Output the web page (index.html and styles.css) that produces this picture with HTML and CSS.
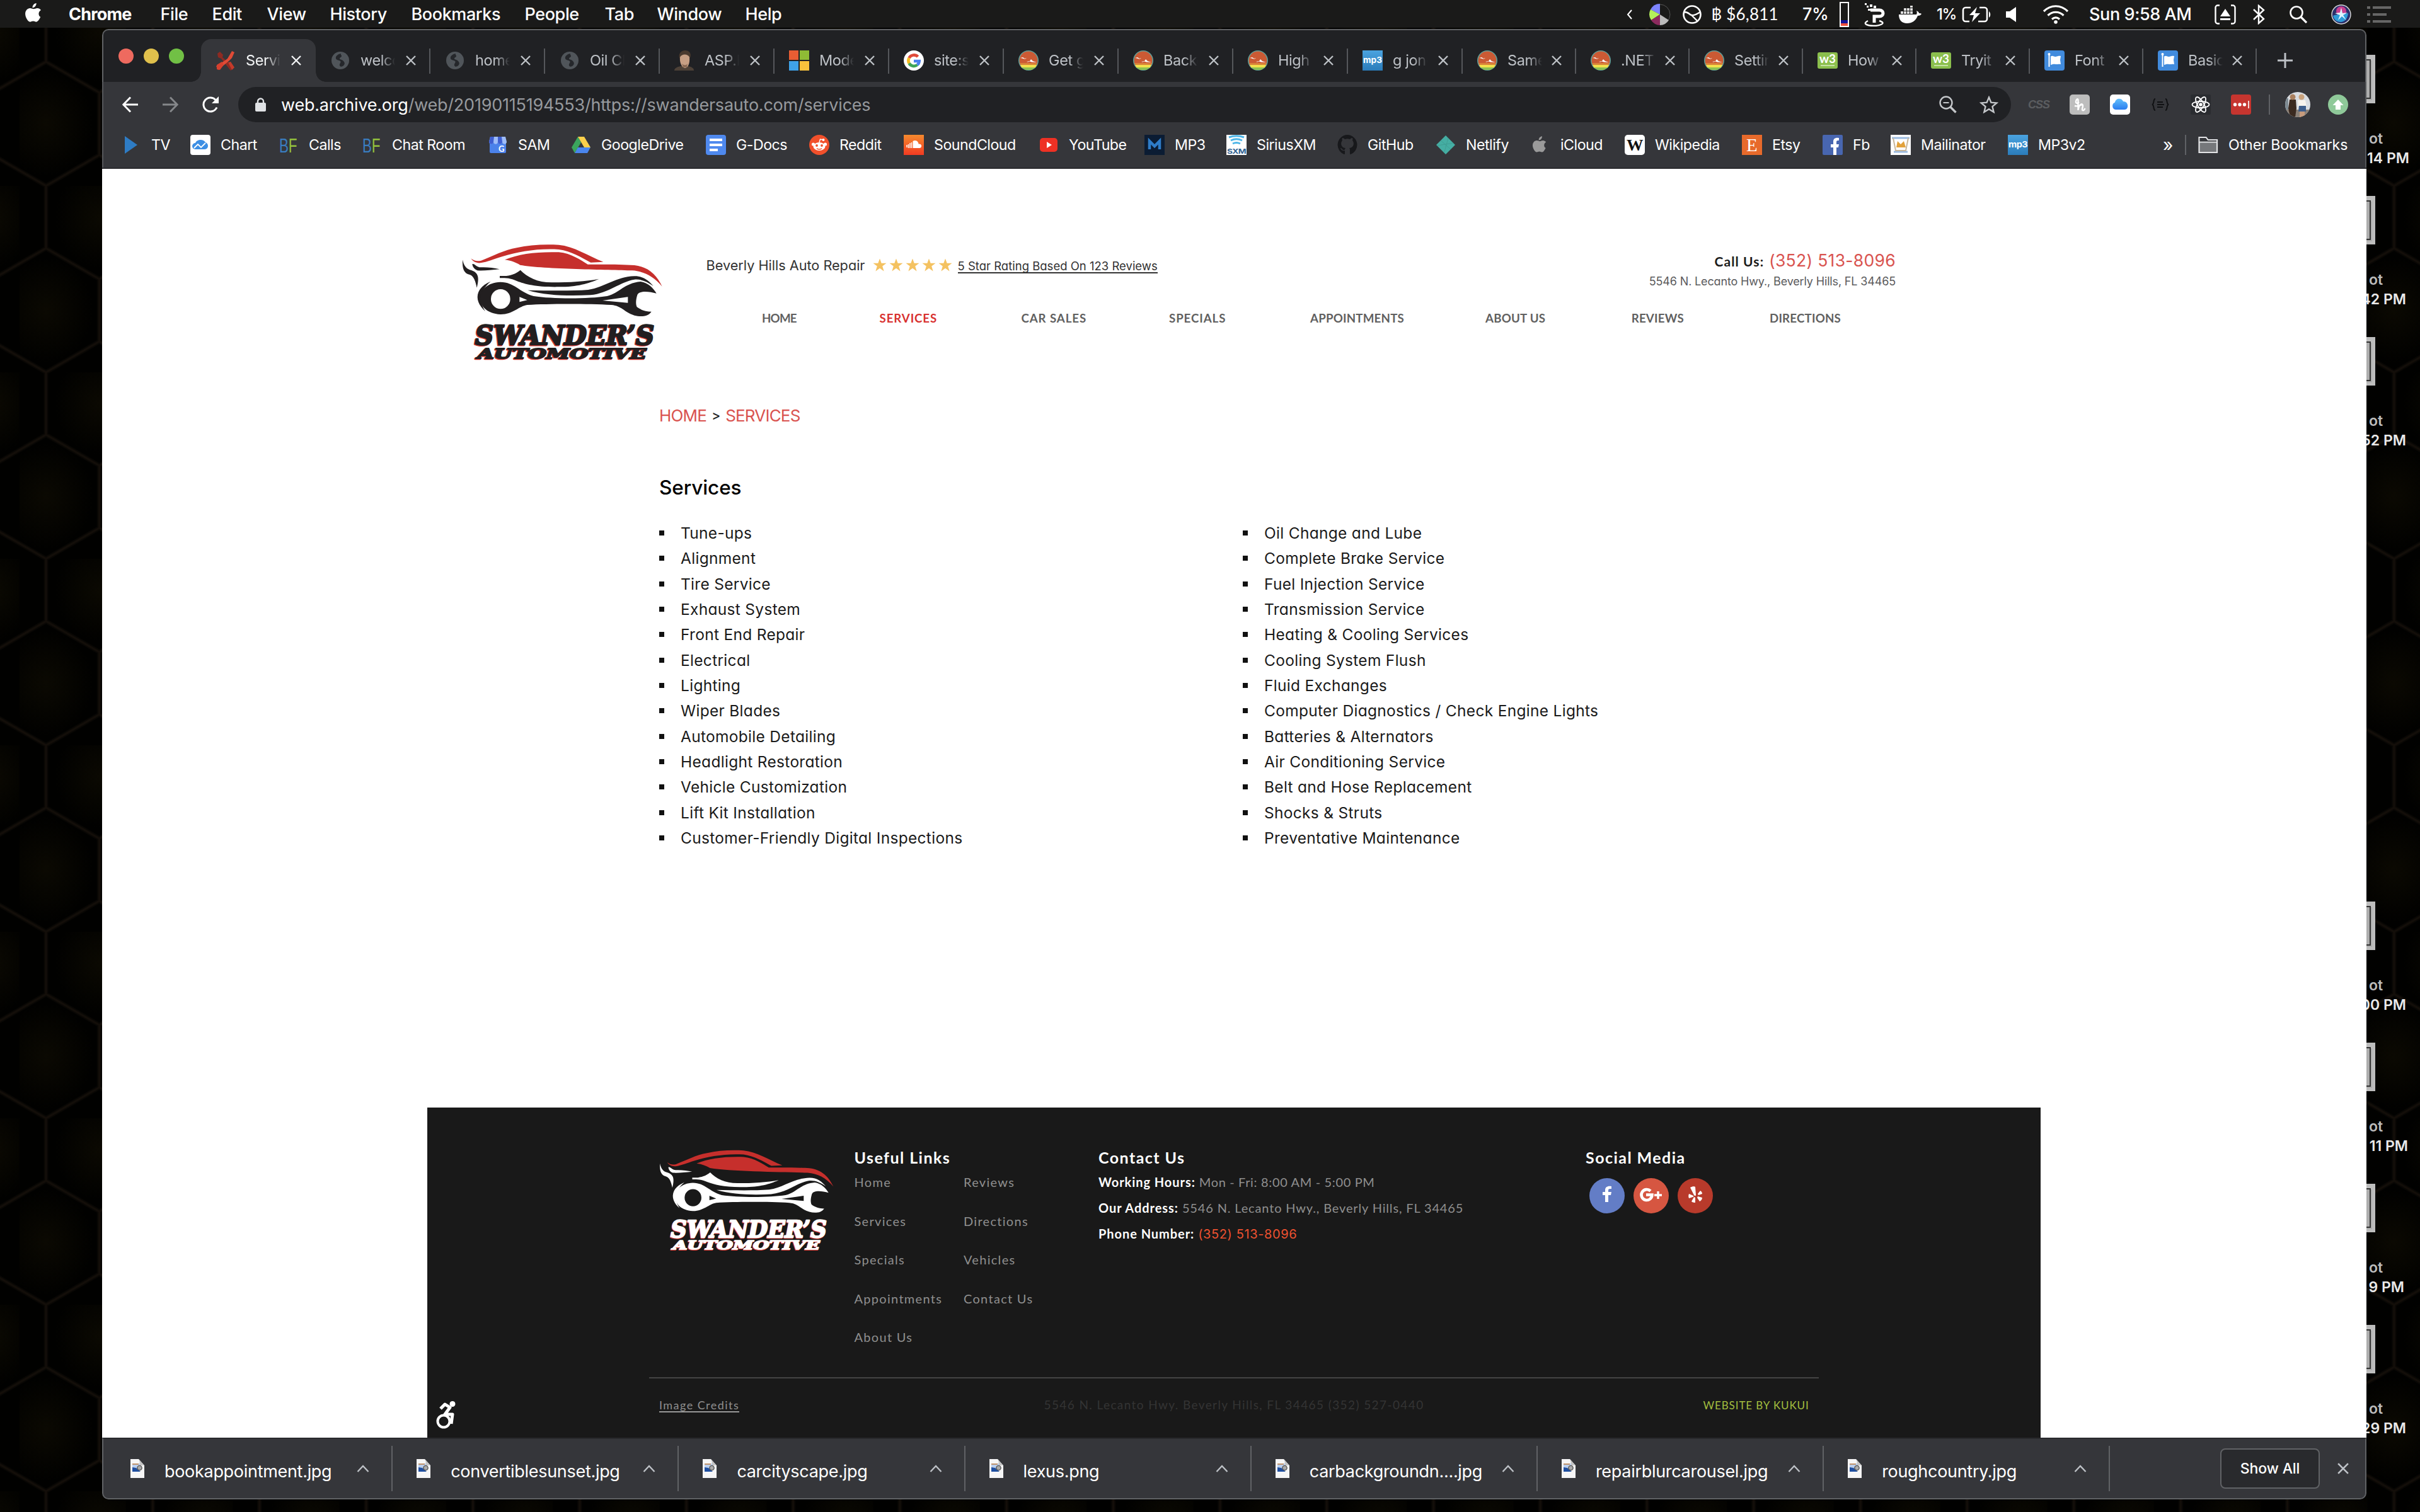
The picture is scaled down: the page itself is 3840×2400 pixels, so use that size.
FILE: index.html
```html
<!DOCTYPE html>
<html lang="en">
<head>
<meta charset="utf-8">
<title>Services</title>
<link rel="stylesheet" href="styles.css">
</head>
<body>
<svg class="defs" width="0" height="0" aria-hidden="true">
  <defs>
    <linearGradient id="g-mp3" x1="0" y1="0" x2="0" y2="1"><stop offset="0" stop-color="#4aa3e0"/><stop offset="1" stop-color="#2b7cba"/></linearGradient>
    <linearGradient id="g-sc" x1="0" y1="0" x2="0" y2="1"><stop offset="0" stop-color="#f58a2e"/><stop offset="1" stop-color="#f23b22"/></linearGradient>
    <linearGradient id="g-cloud" x1="0" y1="0" x2="0" y2="1"><stop offset="0" stop-color="#62c0fb"/><stop offset="1" stop-color="#2a7df0"/></linearGradient>
    <clipPath id="c-round"><circle cx="16" cy="16" r="16"/></clipPath>
  </defs>
  <symbol id="close" viewBox="0 0 16 16"><path d="M1 1L15 15M15 1L1 15" stroke="currentColor" stroke-width="2.4" fill="none"/></symbol>
  <symbol id="globe" viewBox="0 0 32 32"><circle cx="16" cy="16" r="14" fill="#50555a"/><path d="M17 5c-5 1-9 4-8 8 1 3 5 2 7 4s-2 4-1 7 5 2 7-1 0-5-2-7-5-1-5-3 3-2 3-4-2-2-1-4z" fill="#25272b"/></symbol>
  <symbol id="sunset" viewBox="0 0 32 32"><g clip-path="url(#c-round)"><rect width="32" height="32" fill="#5f9d97"/><circle cx="16" cy="16" r="14.4" fill="#cb5a34"/><path d="M2 20h28l-2 4H4z" fill="#d9823a"/><path d="M3 23h26l-2 4H5z" fill="#f3e04b"/><path d="M5 27h22l-6 4H11z" fill="#8cc152"/><path d="M3 12l4-1 3 2 3-1-2 1.500-2 0-3-1zM13 18l5-1 2-3 3 3 6 2-8-.5-3-1-3 1z" fill="#fff"/></g></symbol>
  <symbol id="mp3" viewBox="0 0 32 32"><rect width="32" height="32" fill="url(#g-mp3)"/><text x="1" y="20" font-family="Inter, sans-serif" font-weight="700" font-size="13.5" fill="#fff" textLength="30" lengthAdjust="spacingAndGlyphs">mp3</text></symbol>
  <symbol id="w3" viewBox="0 0 32 32"><rect y="3" width="32" height="26" rx="3" fill="#8bbf4d"/><text x="3" y="20" font-family="Lato, sans-serif" font-weight="700" font-size="18" fill="#fff" textLength="26" lengthAdjust="spacingAndGlyphs">w3</text><path d="M5 24h22" stroke="#d8ecc0" stroke-width="1.5"/></symbol>
  <symbol id="flag" viewBox="0 0 32 32"><rect width="32" height="32" rx="4" fill="#418bdd"/><path d="M7.500 6v20" stroke="#fff" stroke-width="2"/><circle cx="7.500" cy="6" r="2" fill="#fff"/><path d="M10 9.500c4-2 5 1 8 .5s4-1.500 8-1l-1 6 1 7c-4-1-5 .5-8 0s-4-.5-8 1z" fill="#fff"/></symbol>
  <symbol id="bf" viewBox="0 0 32 32"><text x="1" y="27.500" font-family="Liberation Sans, sans-serif" font-size="32" font-weight="400" textLength="28" lengthAdjust="spacingAndGlyphs"><tspan fill="#3a7dc0">B</tspan><tspan fill="#93c13d">F</tspan></text></symbol>
  <symbol id="apple" viewBox="0 0 24 28"><path d="M16.300 0c.2 2-.7 3.800-1.700 5-1.100 1.200-2.500 1.900-4 1.800-.2-1.800.7-3.600 1.700-4.700C13.400.9 15 .1 16.300 0zM22.500 20.400c-.6 1.500-1 2.200-1.800 3.400-1.200 1.800-2.700 3.900-4.600 3.900-1.700 0-2.200-1.100-4.500-1.100s-2.800 1.100-4.500 1.100c-1.900 0-3.300-2-4.500-3.700C-.5 19.400-.8 13.800 1.300 10.900 2.700 8.800 5 7.500 7.200 7.500c2.200 0 3.600 1.200 5.400 1.200 1.700 0 2.800-1.200 5.300-1.200 1.900 0 3.900 1 5.300 2.800-4.700 2.500-3.900 9-.7 10.100z" fill="currentColor"/></symbol>
  <symbol id="file" viewBox="0 0 22 30"><path d="M0 0h13l9 10v20H0z" fill="#f6f6f6"/><path d="M13 0c2 3 2 6 1 10h8z" fill="#c4c4c4"/><path d="M3 7h12v13H3z" fill="#bcd0ee"/><path d="M3 7h10v2H3z" fill="#c0936a"/><path d="M3 13l6 1 7 6H3z" fill="#1f4fa0"/><circle cx="14.500" cy="14" r="3.600" fill="#aaa" stroke="#555" stroke-width="1.400"/></symbol>
  <symbol id="caret" viewBox="0 0 20 12"><path d="M1.500 11L10 2l8.500 9" stroke="#bdc1c6" stroke-width="2.400" fill="none"/></symbol>
  <symbol id="star" viewBox="0 0 24 24"><path d="M12 .5l2.900 8h8.600l-6.900 5.200 2.600 8.600L12 17.200l-7.200 5.100 2.600-8.600L.5 8.500h8.600z" fill="#f4c261"/></symbol>
  <symbol id="logo" viewBox="0 0 1035 660">
    <g fill="#c62f2c">
      <path d="M82 121C98 134 112 135 130 131C190 108 240 80 300 70C360 56 430 52 500 56C570 62 640 108 712 137L652 140C610 118 560 86 500 78C400 72 310 88 230 112C190 124 160 138 128 142C108 144 92 136 82 121z"/>
      <path d="M243 127C310 98 400 88 500 91C560 96 605 130 638 149C710 149 800 148 860 153C930 162 965 200 992 254C950 204 905 182 850 178C740 174 430 172 316 152C295 140 272 130 243 127z"/>
    </g>
    <g fill="currentColor">
      <path d="M42 127C48 158 62 172 84 177C114 188 124 206 110 260C104 232 96 204 76 198C48 192 40 170 42 127z"/>
      <path d="M88 148C98 142 108 164 130 163C160 162 190 165 218 172C180 176 140 180 112 178C98 172 90 162 88 148z"/>
      <path d="M219 204H250C280 200 300 190 317 176C350 210 400 236 470 235C550 235 630 230 692 218C640 240 590 256 500 256C400 258 340 244 300 228C270 214 250 214 219 214z"/>
      <path d="M352 272C450 274 560 276 640 270C720 258 770 208 860 205C900 204 930 226 950 252C920 230 890 218 860 221C790 232 740 286 650 295C550 300 440 298 352 272z"/>
      <path d="M176 230C106 258 90 320 150 372C118 326 126 270 176 230z"/>
      <path fill-rule="evenodd" d="M222 233C290 234 310 280 380 300C470 314 640 314 730 300C790 286 810 238 890 231C925 236 950 262 965 287C930 278 885 272 874 294C866 320 866 340 872 352C890 366 915 374 941 374C925 398 890 400 860 392C810 376 800 346 750 342C640 336 450 336 350 342C310 348 280 388 222 387C90 380 98 236 222 233zM223 267A46 47 0 1 0 223 361A46 47 0 1 0 223 267zM313 304V328L350 319zM829 304V332L708 321z"/>
    </g>
    <g font-family="DejaVu Serif, serif" font-weight="700" font-style="italic" stroke-linejoin="round">
      <g fill="#d63a34" stroke="#d63a34">
        <text x="98" y="535" font-size="130" stroke-width="9" textLength="854" lengthAdjust="spacingAndGlyphs">SWANDER’S</text>
        <text x="110" y="600" font-size="66" stroke-width="7" textLength="804" lengthAdjust="spacingAndGlyphs">AUTOMOTIVE</text>
      </g>
      <g fill="currentColor" stroke="currentColor">
        <text x="101" y="531" font-size="130" stroke-width="8" textLength="854" lengthAdjust="spacingAndGlyphs">SWANDER’S</text>
        <text x="113" y="597" font-size="66" stroke-width="6" textLength="804" lengthAdjust="spacingAndGlyphs">AUTOMOTIVE</text>
      </g>
    </g>
  </symbol>
</svg>

<div class="desktop">
  <svg class="wallpaper" width="3840" height="2400" aria-hidden="true">
    <defs>
      <radialGradient id="glow"><stop offset="0" stop-color="#0b0902"/><stop offset="1" stop-color="#010100"/></radialGradient>
      <pattern id="hex" width="169.360" height="296" patternUnits="userSpaceOnUse" patternTransform="translate(30.660 295)">
        <rect width="169.360" height="296" fill="#010100"/>
        <ellipse cx="42.340" cy="197" rx="76" ry="84" fill="url(#glow)"/><ellipse cx="127" cy="50" rx="70" ry="80" fill="url(#glow)"/>
        <path d="M42.340 0V99L127 148V247L42.340 296M42.340 99L-42.340 148M127 148L211.700 99M-42.340 247L42.340 296M127 247L211.700 296M42.340 0L-42.340 -49M42.340 0L127 -49" fill="none" stroke="#090704" stroke-width="7"/>
        <path d="M42.340 0V99L127 148V247L42.340 296M42.340 99L-42.340 148M127 148L211.700 99M-42.340 247L42.340 296M127 247L211.700 296M42.340 0L-42.340 -49M42.340 0L127 -49" fill="none" stroke="#130e09" stroke-width="3"/>
      </pattern>
    </defs>
    <rect width="3840" height="2400" fill="url(#hex)"/>
  </svg>

  <header class="menubar">
    <nav class="menus">
      <span><svg width="26" height="30"><use href="#apple"/></svg></span>
      <b>Chrome</b><span>File</span><span>Edit</span><span>View</span><span>History</span><span>Bookmarks</span><span>People</span><span>Tab</span><span>Window</span><span>Help</span>
    </nav>
    <div class="status">
      <span><svg width="10" height="16" viewBox="0 0 10 16"><path d="M8 1L2 8l6 7" fill="none" stroke="#fff" stroke-width="2"/></svg></span>
      <span><svg width="34" height="34" viewBox="-17 -17 34 34"><circle r="16" fill="none" stroke="#555" stroke-width="1"/><path d="M0 0V-17A17 17 0 0 0 -15 -8z" fill="#7d84ff"/><path d="M0 0L-15 -8A17 17 0 0 0 -14 9z" fill="#b4f05a"/><path d="M0 0L-14 9A17 17 0 0 0 0 17z" fill="#8c2a5e"/><path d="M0 0V17A17 17 0 0 0 14 9z" fill="#bbb"/></svg></span>
      <span><svg width="32" height="32" viewBox="0 0 32 32"><circle cx="16" cy="16" r="13.500" fill="none" stroke="#fff" stroke-width="2.600"/><path d="M3 12c8 0 8 4 12 5s8-1 14-5M15 17l9 9" fill="none" stroke="#fff" stroke-width="2.400"/></svg></span>
      <span class="lato">฿ $6,811</span>
      <span>7%</span>
      <span><svg width="15" height="40" viewBox="0 0 15 40"><rect x="1" y="1" width="13" height="38" fill="none" stroke="#fff" stroke-width="2"/><rect x="2" y="29" width="11" height="6" fill="#14149a"/><rect x="2" y="34" width="11" height="4" fill="#f0503c"/></svg></span>
      <span><svg width="36" height="38" viewBox="0 0 36 38"><path d="M3 1h3v3H3zM6 5h3v3H6zM11 3h4v4h-4zM17 5h4v4h-4zM8 10h6v3H8z" fill="#fff"/><path d="M12 12h14c8 0 8 10 0 10h-8v10" fill="none" stroke="#fff" stroke-width="5"/><path d="M8 29c-10 5 0 8 9 8s22-4 9-8" fill="none" stroke="#fff" stroke-width="2.400"/></svg></span>
      <span><svg width="36" height="28" viewBox="0 0 36 28"><path d="M0 14h28c1-2 1-4 0-6 3 1 4 3 4 4 2 0 3 0 4 1-1 2-3 3-6 3-3 8-9 12-17 12C5 28 0 23 0 14z" fill="#fff"/><path d="M3 9h4v4H3zM8 9h4v4H8zM13 9h4v4h-4zM18 9h4v4h-4zM8 4h4v4H8zM13 4h4v4h-4zM18 4h4v4h-4zM18 0h4v3h-4z" fill="#ddd"/></svg></span>
      <span class="small">1%</span>
      <span><svg width="46" height="26" viewBox="0 0 46 26"><path d="M14 2H6a4 4 0 0 0-4 4v14a4 4 0 0 0 4 4h6M28 2h8a4 4 0 0 1 4 4v14a4 4 0 0 1-4 4H26" fill="none" stroke="#fff" stroke-width="2.600"/><path d="M24 1L12 14h7l-3 11 13-14h-8z" fill="#fff"/><path d="M43 8c3 2 3 8 0 10z" fill="#fff"/></svg></span>
      <span><svg width="18" height="26" viewBox="0 0 18 26"><path d="M0 8h6L16 1v24L6 18H0z" fill="#fff"/></svg></span>
      <span><svg width="42" height="30" viewBox="0 0 42 30"><path d="M2 10C13-1 29-1 40 10M8.500 16.500c7-7 18-7 25 0M15 22.500c4-3.500 8-3.500 12 0" fill="none" stroke="#fff" stroke-width="3.200"/><circle cx="21" cy="27" r="2.800" fill="#fff"/></svg></span>
      <span>Sun 9:58 AM</span>
      <span><svg width="34" height="32" viewBox="0 0 34 32"><path d="M8 1.500H5A3.500 3.500 0 0 0 1.500 5v22A3.500 3.500 0 0 0 5 30.500h3M26 1.500h3A3.500 3.500 0 0 1 32.500 5v22a3.500 3.500 0 0 1-3.500 3.500h-3" fill="none" stroke="#fff" stroke-width="2.400"/><path d="M17 7l8 12H9zM9 22h16v3H9z" fill="#fff"/></svg></span>
      <span><svg width="20" height="32" viewBox="0 0 20 32"><path d="M2 8l16 15-8 7V2l8 7L2 24" fill="none" stroke="#fff" stroke-width="2.400"/></svg></span>
      <span><svg width="28" height="28" viewBox="0 0 28 28"><circle cx="11" cy="11" r="9.500" fill="none" stroke="#fff" stroke-width="2.600"/><path d="M18 18l9 9" stroke="#fff" stroke-width="3.200"/></svg></span>
      <span><svg width="32" height="32" viewBox="0 0 32 32"><circle cx="16" cy="16" r="15" fill="#2b2f6b" stroke="#ddd" stroke-width="1.400"/><circle cx="16" cy="11" r="8" fill="#c83f8f"/><path d="M3 18c6-3 16-2 24-4-1 9-6 14-12 14S4 24 3 18z" fill="#2f9bd8"/><path d="M16 5l2 9 8-1-7 4 5 8-7-6-6 6 3-8-8-3 8-1z" fill="#dff6ff"/></svg></span>
      <span><svg width="38" height="26" viewBox="0 0 38 26"><path d="M0 2h5M9 2h29M0 13h5M9 13h22M0 24h5M9 24h29" stroke="#666" stroke-width="4"/></svg></span>
    </div>
  </header>

  <div class="shot" style="top:87px"><i></i><p>ot</p><p class="time">14 PM</p></div>
  <div class="shot b" style="top:311px"><i></i><p>ot</p><p class="time">42 PM</p></div>
  <div class="shot b" style="top:535px"><i></i><p>ot</p><p class="time">52 PM</p></div>
  <div class="shot b" style="top:1431px"><i></i><p>ot</p><p class="time">00 PM</p></div>
  <div class="shot a" style="top:1655px"><i></i><p>ot</p><p class="time">11 PM</p></div>
  <div class="shot c" style="top:1879px"><i></i><p>ot</p><p class="time">9 PM</p></div>
  <div class="shot b" style="top:2103px"><i></i><p>ot</p><p class="time">29 PM</p></div>

  <section class="window">
    <div class="tabstrip">
      <div class="lights"><i></i><i></i><i></i></div>
      <div class="tab active"><svg class="fav" viewBox="0 0 32 32"><path d="M3 5l4-3 5 5-1 4 18 16-5 5L9 13l-5-2z" fill="#8e2a22"/><path d="M26 1l-7 12-4 3L1 25l3 6 17-14 5-5 4-9z" fill="#e04b36"/><path d="M2 23l8-5 3 5-6 8-5-1z" fill="#d6402e"/><path d="M20 19l4-1 6 9-4 4z" fill="#c53b2a"/></svg><span>Servic</span><svg class="x"><use href="#close"/></svg></div>
      <div class="tab"><svg class="fav"><use href="#globe"/></svg><span>welco</span><svg class="x"><use href="#close"/></svg></div>
      <div class="tab"><svg class="fav"><use href="#globe"/></svg><span>home</span><svg class="x"><use href="#close"/></svg></div>
      <div class="tab"><svg class="fav"><use href="#globe"/></svg><span>Oil Ch</span><svg class="x"><use href="#close"/></svg></div>
      <div class="tab"><svg class="fav" viewBox="0 0 32 32"><path d="M0 32c0-4 5-6 10-7h12c5 1 9 3 9 7z" fill="#4d4137"/><path d="M8 12C6 4 12 0 17 0s11 3 8 12z" fill="#4a3a2e"/><path d="M9 11c2-6 13-6 15 0 1 8-2 17-7 17s-9-9-8-17z" fill="#c79f84"/><path d="M12 21c3 3 7 3 9 0l-1 6h-6z" fill="#8a6a55"/></svg><span>ASP.N</span><svg class="x"><use href="#close"/></svg></div>
      <div class="tab"><svg class="fav" viewBox="0 0 32 32"><path d="M0 0h15v15H0z" fill="#e85d33"/><path d="M17 0h15v15H17z" fill="#8fbb35"/><path d="M0 17h15v15H0z" fill="#3fa2e8"/><path d="M17 17h15v15H17z" fill="#f9c23c"/></svg><span>Moder</span><svg class="x"><use href="#close"/></svg></div>
      <div class="tab"><svg class="fav" viewBox="0 0 32 32"><circle cx="16" cy="16" r="16" fill="#fff"/><g fill="none" stroke-width="4.600"><path d="M8.500 12A8.800 8.800 0 0 1 22.500 10" stroke="#e04a3a"/><path d="M8.500 12a9 9 0 0 0 0 8.500" stroke="#f6bb1e"/><path d="M8.500 20.500A8.800 8.800 0 0 0 21.500 23" stroke="#3fa558"/><path d="M21.500 23a8.500 8.500 0 0 0 3.200-6H16" stroke="#4a80ee"/></g></svg><span>site:s</span><svg class="x"><use href="#close"/></svg></div>
      <div class="tab"><svg class="fav"><use href="#sunset"/></svg><span>Get g</span><svg class="x"><use href="#close"/></svg></div>
      <div class="tab"><svg class="fav"><use href="#sunset"/></svg><span>Backg</span><svg class="x"><use href="#close"/></svg></div>
      <div class="tab"><svg class="fav"><use href="#sunset"/></svg><span>High l</span><svg class="x"><use href="#close"/></svg></div>
      <div class="tab"><svg class="fav"><use href="#mp3"/></svg><span>g jone</span><svg class="x"><use href="#close"/></svg></div>
      <div class="tab slim"><svg class="fav"><use href="#sunset"/></svg><span>Same</span><svg class="x"><use href="#close"/></svg></div>
      <div class="tab slim"><svg class="fav"><use href="#sunset"/></svg><span>.NET</span><svg class="x"><use href="#close"/></svg></div>
      <div class="tab slim"><svg class="fav"><use href="#sunset"/></svg><span>Settin</span><svg class="x"><use href="#close"/></svg></div>
      <div class="tab slim"><svg class="fav"><use href="#w3"/></svg><span>How T</span><svg class="x"><use href="#close"/></svg></div>
      <div class="tab slim"><svg class="fav"><use href="#w3"/></svg><span>Tryit E</span><svg class="x"><use href="#close"/></svg></div>
      <div class="tab slim"><svg class="fav"><use href="#flag"/></svg><span>Font A</span><svg class="x"><use href="#close"/></svg></div>
      <div class="tab slim"><svg class="fav"><use href="#flag"/></svg><span>Basic</span><svg class="x"><use href="#close"/></svg></div>
      <svg class="plus" viewBox="0 0 24 24"><path d="M12 0v24M0 12h24" stroke="#bdc1c6" stroke-width="3"/></svg>
    </div>

    <div class="toolbar">
      <div class="navbtns">
        <svg width="26" height="26" viewBox="0 0 26 26"><path d="M25 13H2M13 1.500L1.800 13 13 24.500" fill="none" stroke="#fff" stroke-width="3"/></svg>
        <svg width="26" height="26" viewBox="0 0 26 26"><path d="M1 13h23M13 1.500L24.200 13 13 24.500" fill="none" stroke="#85878a" stroke-width="3"/></svg>
        <svg width="28" height="26" viewBox="0 0 28 26"><path d="M24 17.500A11 11 0 1 1 22 5.500" fill="none" stroke="#fff" stroke-width="3"/><path d="M27 0v11H16z" fill="#fff"/></svg>
      </div>
      <div class="omnibox">
        <svg width="17" height="22" viewBox="0 0 17 22"><rect y="8" width="17" height="14" rx="2" fill="#e0e2e5"/><path d="M4 9V6a4.500 4.500 0 0 1 9 0v3" fill="none" stroke="#e0e2e5" stroke-width="2.400"/></svg>
        <span class="url"><em>web.archive.org</em>/web/20190115194553/https://swandersauto.com/services</span>
        <svg width="28" height="28" viewBox="0 0 28 28"><circle cx="11" cy="11" r="9.500" fill="none" stroke="#c4c7ca" stroke-width="2.400"/><path d="M18 18l8.500 8.500" stroke="#c4c7ca" stroke-width="3.400"/><path d="M6.500 11h9" stroke="#c4c7ca" stroke-width="2.200"/></svg>
        <svg class="fave" width="30" height="28" viewBox="0 0 30 28"><path d="M15 2.500l3.400 8.200 8.900.7-6.800 5.800 2.100 8.700L15 21.200l-7.600 4.700 2.100-8.700-6.800-5.800 8.900-.7z" fill="none" stroke="#c4c7ca" stroke-width="2.400"/></svg>
      </div>
      <div class="exts">
        <span class="css">CSS</span>
        <svg width="32" height="32" viewBox="0 0 32 32"><rect width="32" height="32" rx="5" fill="#bdbdbd"/><path d="M13.500 25V9c0-3-3-2-3.500 2s3 3 5 1M13.500 24c1-7 5-10 7-8s-2 8 0 9 3-1 4-3M8 18c4 1 8 0 12-2" fill="none" stroke="#fff" stroke-width="2.400"/></svg>
        <svg width="32" height="32" viewBox="0 0 32 32"><rect width="32" height="32" rx="5" fill="#fff"/><path d="M9 24a6 6 0 0 1-1-11.500C9 5 19 5 21 11c6 0 8 5 7 9-1 3-3 4-5 4z" fill="url(#g-cloud)"/></svg>
        <svg width="28" height="20" viewBox="0 0 28 20"><path d="M6 1C2 1 5 9 1 10c4 1 1 9 5 9M22 1c4 0 1 8 5 9-4 1-1 9-5 9M9 6h9M9 10h11M9 14h9" fill="none" stroke="#101113" stroke-width="2"/></svg>
        <svg width="32" height="32" viewBox="-16 -16 32 32"><rect x="-16" y="-16" width="32" height="32" rx="2" fill="#2a2c30"/><g fill="none" stroke="#fff" stroke-width="1.800"><ellipse rx="13.500" ry="5"/><ellipse rx="13.500" ry="5" transform="rotate(60)"/><ellipse rx="13.500" ry="5" transform="rotate(120)"/></g><circle r="2.800" fill="#fff"/></svg>
        <svg width="32" height="32" viewBox="0 0 32 32"><rect width="32" height="32" rx="4" fill="#c6352f"/><circle cx="6.500" cy="16" r="2.700" fill="#fff"/><circle cx="14" cy="16" r="2.700" fill="#fff"/><circle cx="21.500" cy="16" r="2.700" fill="#fff"/><path d="M28 10v12" stroke="#fff" stroke-width="1.600"/></svg>
        <i class="rule"></i>
        <svg width="40" height="40" viewBox="0 0 40 40"><clipPath id="c-av"><circle cx="20" cy="20" r="20"/></clipPath><g clip-path="url(#c-av)"><rect width="40" height="40" fill="#d9dde2"/><rect y="28" width="40" height="12" fill="#8b8178"/><path d="M0 10h5v18H0z" fill="#7d8a92"/><path d="M7 12h10l1 14-2 14H8L5 26z" fill="#3a2a20"/><circle cx="12" cy="8" r="4.500" fill="#a9805f"/><path d="M20 13h12l2 10H21z" fill="#f6f3ee"/><path d="M22 22h11v9H21z" fill="#3e5e8c"/><path d="M23 31h8v9h-8z" fill="#c69b7d"/><circle cx="26" cy="8" r="4.500" fill="#c9a27c"/></g></svg>
        <svg width="32" height="32" viewBox="0 0 32 32"><circle cx="16" cy="16" r="16" fill="#8fc999"/><path d="M16 8l8.500 9H20v7h-8v-7H7.500z" fill="#fff"/></svg>
      </div>
    </div>

    <div class="bookmarks">
      <span><svg viewBox="0 0 32 32"><path d="M6 2l20 14L6 30z" fill="#2e7cc4"/></svg>TV</span>
      <span><svg viewBox="0 0 32 32"><rect width="32" height="32" rx="4" fill="#fff"/><path d="M8 23a5 5 0 0 1 0-10c2-6 13-7 16-1 6 2 5 11-1 11z" fill="#3d8fe4"/><path d="M6 21l6-6 5 5 7-7" fill="none" stroke="#fff" stroke-width="1.800"/></svg>Chart</span>
      <span><svg><use href="#bf"/></svg>Calls</span>
      <span><svg><use href="#bf"/></svg>Chat Room</span>
      <span><svg viewBox="0 0 32 32"><path d="M3 12h26v15a2 2 0 0 1-2 2H5a2 2 0 0 1-2-2z" fill="#4b82ea"/><path d="M4 3h24l2 8c0 5-7 5-7 0 0 5-7 5-7 0 0 5-7 5-7 0 0 5-7 5-7 0z" fill="#9ebcf8"/><path d="M4 3h6l-1 8c0 5-7 5-7 0zM16 3h6l1 8c0 5-7 5-7 0z" fill="#3f5fd0"/><text x="17" y="27" font-family="Lato, sans-serif" font-size="13" font-weight="700" fill="#fff">G</text></svg>SAM</span>
      <span><svg viewBox="0 0 32 32"><path d="M11 3L1 20l5 9L16 12z" fill="#3ba55d"/><path d="M11 3h10l10 17H21z" fill="#fcd04b"/><path d="M6 29h20l5-9H11z" fill="#4a86ee"/></svg>GoogleDrive</span>
      <span><svg viewBox="0 0 32 32"><rect width="32" height="32" rx="4" fill="#4f89ee"/><path d="M6 8h20M6 16h20M6 24h13" stroke="#fff" stroke-width="4"/></svg>G-Docs</span>
      <span><svg viewBox="0 0 32 32"><circle cx="16" cy="16" r="16" fill="#f1502b"/><ellipse cx="16" cy="18.500" rx="9.500" ry="6.500" fill="#fff"/><circle cx="6.500" cy="15" r="2.600" fill="#fff"/><circle cx="25.500" cy="15" r="2.600" fill="#fff"/><circle cx="12" cy="17" r="1.900" fill="#f1502b"/><circle cx="20" cy="17" r="1.900" fill="#f1502b"/><path d="M12 21.500c2 2 6 2 8 0" fill="none" stroke="#f1502b" stroke-width="1.400"/><path d="M16 12l1.500-5 5 1" fill="none" stroke="#fff" stroke-width="1.500"/><circle cx="22.500" cy="8" r="2" fill="#fff"/></svg>Reddit</span>
      <span><svg viewBox="0 0 32 32"><rect width="32" height="32" fill="url(#g-sc)"/><path d="M5 20v-4M7.500 21v-6M10 21v-8M12.500 21V12" stroke="#fff" stroke-width="1.500"/><path d="M14.500 21V10c5-3 9 1 9 4.500 6-1 6 6.500 1.500 6.500z" fill="#fff"/></svg>SoundCloud</span>
      <span><svg viewBox="0 0 32 32"><rect x="2" y="5" width="28" height="22" rx="5" fill="#ee3124"/><path d="M13 11l8 5-8 5z" fill="#fff"/></svg>YouTube</span>
      <span><svg viewBox="0 0 32 32"><rect width="32" height="32" fill="#0b1c33"/><path d="M8 23V10l8 8 8-8v13" fill="none" stroke="#2e7cc8" stroke-width="4.500"/></svg>MP3</span>
      <span><svg viewBox="0 0 32 32"><rect width="32" height="32" fill="#fff"/><path d="M4 4c8-3 16-3 24 0M7 9c6-3 12-3 18 0M10 14c4-2 8-2 12 0" fill="none" stroke="#4eb6e8" stroke-width="3"/><text x="1" y="30" font-family="Inter, sans-serif" font-size="11" font-weight="700" fill="#2f6190" textLength="30" lengthAdjust="spacingAndGlyphs">SXM</text></svg>SiriusXM</span>
      <span><svg viewBox="0 0 32 32"><path d="M16 0a16 16 0 0 0-5 31c1 0 1-1 1-2v-4c-5 1-6-2-6-2-1-2-2-2-1-2 2 0 3 2 3 2 2 2 4 1 4 0 0-1 1-2 1-2-8-1-8-9-5-12-1-2 0-4 0-4s2 0 4 2c3-1 5-1 8 0 2-2 4-2 4-2s1 2 0 4c3 3 3 11-5 12 1 1 1 2 1 4v4c0 1 0 2 1 2A16 16 0 0 0 16 0z" fill="#17181b"/></svg>GitHub</span>
      <span><svg viewBox="0 0 32 32"><path d="M16 1l15 15-15 15L1 16z" fill="#45aea3"/><path d="M8 9l16 14M3 17l25-4M20 5l-6 22" stroke="#3d9a91" stroke-width=".8"/></svg>Netlify</span>
      <span class="gray"><svg viewBox="-4 -2 32 32"><use href="#apple" width="22" height="26"/></svg>iCloud</span>
      <span><svg viewBox="0 0 32 32"><rect width="32" height="32" rx="5" fill="#fff"/><text x="3" y="25" font-family="Liberation Serif, serif" font-size="26" font-weight="700" fill="#111" textLength="26" lengthAdjust="spacingAndGlyphs">W</text></svg>Wikipedia</span>
      <span><svg viewBox="0 0 32 32"><rect width="32" height="32" fill="#e76a2b"/><text x="7" y="26" font-family="Liberation Serif, serif" font-size="29" fill="#fff">E</text></svg>Etsy</span>
      <span><svg viewBox="0 0 32 32"><rect width="32" height="32" rx="2" fill="#4866b0"/><path d="M17 32V20h-4v-5h4v-4c0-5 3-7 9-6v4c-3 0-4 0-4 3v3h4l-1 5h-3v12z" fill="#fff"/></svg>Fb</span>
      <span><svg viewBox="0 0 32 32"><rect width="32" height="32" fill="#fff"/><path d="M2 5h28M5 27h22" stroke="#9cbce2" stroke-width="3"/><path d="M4 5l4 20h16l4-20" fill="none" stroke="#c7b79d" stroke-width="2"/><path d="M9 20l2-10 5 5 5-5 3 10z" fill="#e2a23c"/></svg>Mailinator</span>
      <span><svg><use href="#mp3"/></svg>MP3v2</span>
      <span class="more">»</span>
      <span class="other"><svg viewBox="0 0 32 32"><path d="M1.500 4h11l3 4H30v20H1.500zM1.500 11.500H30" fill="#76787b" stroke="#e2e3e5" stroke-width="2.200"/><path d="M2.600 5.100h9.400l3 4h14v1.400H2.600z" fill="#35363a"/></svg>Other Bookmarks</span>
    </div>

    <div class="page">
      <div class="site-head">
        <svg class="brand"><use href="#logo"/></svg>
        <div class="info">
          <div class="info-top">
            <div class="rating">Beverly Hills Auto Repair
              <div class="stars"><svg><use href="#star"/></svg><svg><use href="#star"/></svg><svg><use href="#star"/></svg><svg><use href="#star"/></svg><svg><use href="#star"/></svg></div>
              <a>5 Star Rating Based On 123 Reviews</a>
            </div>
            <div class="call">
              <p class="tel"><b>Call Us:</b> <span>(352) 513-8096</span></p>
              <p class="addr">5546 N. Lecanto Hwy., Beverly Hills, FL 34465</p>
            </div>
          </div>
          <nav class="site-nav"><a class="tight">HOME</a><a class="wide on">SERVICES</a><a class="wide">CAR SALES</a><a class="wide">SPECIALS</a><a>APPOINTMENTS</a><a>ABOUT US</a><a>REVIEWS</a><a>DIRECTIONS</a></nav>
        </div>
      </div>

      <main>
        <p class="crumbs"><a>HOME</a><span>&gt;</span><a>SERVICES</a></p>
        <h1>Services</h1>
        <div class="lists">
          <ul><li>Tune-ups</li><li>Alignment</li><li>Tire Service</li><li>Exhaust System</li><li>Front End Repair</li><li>Electrical</li><li>Lighting</li><li>Wiper Blades</li><li>Automobile Detailing</li><li>Headlight Restoration</li><li>Vehicle Customization</li><li>Lift Kit Installation</li><li>Customer-Friendly Digital Inspections</li></ul>
          <ul><li>Oil Change and Lube</li><li>Complete Brake Service</li><li>Fuel Injection Service</li><li>Transmission Service</li><li>Heating &amp; Cooling Services</li><li>Cooling System Flush</li><li>Fluid Exchanges</li><li>Computer Diagnostics / Check Engine Lights</li><li>Batteries &amp; Alternators</li><li>Air Conditioning Service</li><li>Belt and Hose Replacement</li><li>Shocks &amp; Struts</li><li>Preventative Maintenance</li></ul>
        </div>
      </main>

      <footer>
        <div class="foot-top">
          <svg class="foot-brand"><use href="#logo"/></svg>
          <section>
            <h2>Useful Links</h2>
            <div class="links"><a>Home</a><a>Reviews</a><a>Services</a><a>Directions</a><a>Specials</a><a>Vehicles</a><a>Appointments</a><a>Contact Us</a><a>About Us</a></div>
          </section>
          <section class="contact">
            <h2>Contact Us</h2>
            <p><b>Working Hours:</b> <span class="hours">Mon - Fri: 8:00 AM - 5:00 PM</span></p>
            <p><b>Our Address:</b> <span>5546 N. Lecanto Hwy., Beverly Hills, FL 34465</span></p>
            <p><b>Phone Number:</b> <span class="phone">(352) 513-8096</span></p>
          </section>
          <section>
            <h2>Social Media</h2>
            <div class="social">
              <svg viewBox="0 0 56 56"><circle cx="28" cy="28" r="28" fill="#637dc6"/><path d="M25 38V27h-4v-5h4v-3c0-5 4-7 10-6v4c-4 0-5 0-5 3v2h5l-1 5h-4v11z" fill="#fff"/></svg>
              <svg viewBox="0 0 56 56"><circle cx="28" cy="28" r="28" fill="#d65641"/><path d="M27 20.500a8.500 8.500 0 1 0 2.500 6H20" fill="none" stroke="#fff" stroke-width="4.600"/><path d="M39 21v12M33 27h12" stroke="#fff" stroke-width="3.400"/></svg>
              <svg viewBox="0 0 56 56"><circle cx="28" cy="28" r="28" fill="#b83a2b"/><path d="M20 15c3-2 7-2 8-1l1 13c-1 2-2 1-3 0zM32 25l4-5c2 1 3 3 3 5l-6 2zM32 29l7 2c0 3-2 5-4 6l-4-6zM28 31v8c-3 0-5-1-6-2l4-7zM18 25l7 3c1 1 0 2-1 2l-6 2c-1-2-1-5 0-7z" fill="#fff"/></svg>
            </div>
          </section>
        </div>
        <div class="foot-bottom"><a class="credits">Image Credits</a><span class="faint">5546 N. Lecanto Hwy. Beverly Hills, FL 34465 (352) 527-0440</span><span class="by">WEBSITE BY KUKUI</span></div>
        <svg class="access" viewBox="0 0 32 44"><circle cx="26" cy="4.500" r="4.500" fill="#fff"/><path d="M7 12l7-7 8 5-8 11h12l-2 15" fill="none" stroke="#fff" stroke-width="5" stroke-linejoin="round"/><circle cx="12" cy="32" r="9.500" fill="none" stroke="#fff" stroke-width="4"/></svg>
      </footer>
    </div>

    <div class="downloads">
      <div class="dl"><svg class="doc"><use href="#file"/></svg><span>bookappointment.jpg</span><svg class="up"><use href="#caret"/></svg></div>
      <div class="dl"><svg class="doc"><use href="#file"/></svg><span>convertiblesunset.jpg</span><svg class="up"><use href="#caret"/></svg></div>
      <div class="dl"><svg class="doc"><use href="#file"/></svg><span>carcityscape.jpg</span><svg class="up"><use href="#caret"/></svg></div>
      <div class="dl"><svg class="doc"><use href="#file"/></svg><span>lexus.png</span><svg class="up"><use href="#caret"/></svg></div>
      <div class="dl"><svg class="doc"><use href="#file"/></svg><span>carbackgroundn....jpg</span><svg class="up"><use href="#caret"/></svg></div>
      <div class="dl"><svg class="doc"><use href="#file"/></svg><span>repairblurcarousel.jpg</span><svg class="up"><use href="#caret"/></svg></div>
      <div class="dl"><svg class="doc"><use href="#file"/></svg><span>roughcountry.jpg</span><svg class="up"><use href="#caret"/></svg></div>
      <button>Show All</button>
      <svg class="shut"><use href="#close"/></svg>
    </div>
  </section>
</div>
</body>
</html>
```
FILE: styles.css
```css
* { box-sizing: border-box; margin: 0; padding: 0; }
html, body { width: 3840px; height: 2400px; overflow: hidden; background: #000; }
body { font-family: Inter, "Liberation Sans", sans-serif; }
.defs { position: absolute; }
svg { display: block; flex: none; }
ul { list-style: none; }

.desktop { position: relative; width: 3840px; height: 2400px; overflow: hidden; }
.wallpaper { position: absolute; left: 0; top: 0; }

/* menu bar */
.menubar { position: relative; display: flex; justify-content: space-between; height: 44px; background: #1a1a19; color: #fff; font-size: 27px; font-weight: 500; letter-spacing: -.4px; line-height: 45px; white-space: nowrap; }
.menus { display: grid; grid-template-columns: 69px 145.500px 82px 87px 100px 129px 180px 127px 83px 140px 100px; padding-left: 40px; }
.menus svg { margin-top: 5px; }
.menus b { font-weight: 700; letter-spacing: -.8px; }
.status { display: grid; align-items: center; grid-template-columns: 36px 52px 46px 145px 59px 37px 57px 60px 40px 70px 58px 74px 199px 60px 59px 66px 57px 84px; }
.status .lato { font-family: Lato, "Noto Sans", "DejaVu Sans", sans-serif; font-weight: 400; font-size: 26px; letter-spacing: .2px; }
.status .small { font-size: 24px; letter-spacing: -1.500px; }

/* screenshots lying on the desktop, half under the window */
.shot { position: absolute; left: 3650px; width: 173px; text-align: right; white-space: nowrap; font-weight: 600; font-size: 23px; line-height: 31px; }
.shot.a { width: 171px; }
.shot.b { width: 168px; }
.shot.c { width: 165px; }
.shot i { display: block; width: 119px; height: 77px; background: #adadad; border: solid #bdbdbd; border-width: 9px 5px 5px; outline: 2px solid #333; outline-offset: -9px; margin-bottom: 41px; }
.shot p { width: 131px; color: #bbb; }
.shot .time { width: auto; color: #e9e9e9; }

/* browser window */
.window { position: absolute; left: 162px; top: 46px; width: 3593px; height: 2334px; border-radius: 10px; overflow: hidden; background: #35363a; display: flex; flex-direction: column; }
.tabstrip { display: flex; height: 84px; padding-top: 14px; background: #202124; border: 2px solid #606265; border-bottom: 0; border-radius: 10px 10px 0 0; }
.lights { display: flex; gap: 16px; width: 155px; padding: 15px 0 0 24px; }
.lights i { width: 24px; height: 24px; border-radius: 50%; background: #ee6a5f; }
.lights i:nth-child(2) { background: #e0c04c; }
.lights i:nth-child(3) { background: #71c045; }
.tab { position: relative; display: flex; align-items: center; width: 182px; padding-left: 23px; color: #bdc1c6; font-size: 23.500px; }
.tab.slim { width: 180px; }
.tab .fav { width: 32px; height: 32px; }
.tab span { width: 55px; margin: 0 17px 0 16px; line-height: 40px; overflow: hidden; white-space: nowrap; letter-spacing: -.4px; -webkit-mask-image: linear-gradient(90deg, #000 60%, transparent); mask-image: linear-gradient(90deg, #000 60%, transparent); }
.tab.slim span { margin-right: 15px; }
.tab .x { width: 16px; height: 16px; }
.tab:not(.active)::after { content: ""; position: absolute; right: 0; top: 15px; width: 2px; height: 40px; background: #55575b; }
.tab.active { background: #35363a; color: #f1f3f4; border-radius: 16px 16px 0 0; }
.tab.active::before, .tab.active::after { content: ""; position: absolute; bottom: 0; width: 16px; height: 16px; }
.tab.active::before { left: -16px; background: radial-gradient(circle at 0 0, transparent 15.500px, #35363a 16px); }
.tab.active::after { right: -16px; background: radial-gradient(circle at 100% 0, transparent 15.500px, #35363a 16px); }
.plus { width: 24px; height: 24px; margin: 22px 0 0 33px; }

.toolbar { display: flex; align-items: center; height: 72px; padding-right: 22px; border: 2px solid #55575a; border-width: 0 2px; }
.navbtns { display: flex; gap: 37px; width: 214px; padding-left: 30px; }
.omnibox { display: flex; align-items: center; width: 2813px; height: 56px; padding: 0 20px 0 27px; border-radius: 28px; background: #202124; }
.url { flex: 1; margin-left: 24px; font-size: 27px; letter-spacing: -.23px; color: #96999d; white-space: nowrap; }
.url em { font-style: normal; color: #fff; }
.fave { margin-left: 36px; }
.exts { display: grid; flex: 1; align-items: center; grid-template-columns: 66px 64px 66px 62px 64px 60px 26px 68px 32px; padding-left: 27px; }
.css { font: italic 700 18px "Liberation Sans", sans-serif; letter-spacing: -1px; color: #5b5d60; }
.rule { width: 2px; height: 32px; background: #5f6165; }

.bookmarks { display: grid; grid-template-columns: 110px 140px 132px 200px 132px 214px 164px 150px 214px 168px 130px 176px 156px 150px 150px 186px 128px 108px 186px 246px 35px 250px; height: 64px; padding: 0 0 8px 28px; align-items: center; border: 2px solid #55575a; border-width: 0 2px; font-size: 23.200px; letter-spacing: -.5px; color: #fff; white-space: nowrap; }
.bookmarks span { display: flex; align-items: center; gap: 16px; height: 56px; }
.bookmarks svg { width: 32px; height: 32px; }
.bookmarks .gray svg { color: #9a9a9a; }
.bookmarks .more { font-size: 28px; line-height: 28px; }
.bookmarks .other { height: 32px; border-left: 2px solid #5f6165; padding-left: 19px; letter-spacing: -.1px; }

/* web page */
.page { display: flex; flex-direction: column; height: 2016px; border-top: 2px solid #2a2b2e; background: #fff; }
.site-head { display: flex; width: 2288px; margin-left: 558px; padding-top: 102px; }
.brand { width: 345px; height: 220px; color: #221f20; }
.info { flex: 1; padding-left: 55.600px; }
.info-top { display: flex; justify-content: space-between; height: 120px; font-feature-settings: "cv11"; }
.rating { display: flex; align-items: center; height: 40px; margin-top: 31px; font-size: 21.700px; letter-spacing: -.02px; color: #333; white-space: nowrap; }
.stars { display: flex; gap: 4px; margin: 0 9px 0 12px; }
.stars svg { width: 22px; height: 22px; }
.rating a { font-size: 18.500px; letter-spacing: 0; border-bottom: 2px solid #333; line-height: 20px; padding-top: 3px; }
.call { padding-top: 27px; text-align: right; white-space: nowrap; }
.tel { line-height: 32px; font-size: 26.500px; letter-spacing: .3px; color: #d9534f; }
.tel b { font: 700 21px/32px Lato, sans-serif; letter-spacing: 1.100px; color: #1b1b1b; }
.addr { margin-top: 2px; font-size: 18px; line-height: 28px; letter-spacing: -.15px; color: #5a5a5c; }
.site-nav { display: grid; grid-template-columns: 186.500px 225px 234.500px 224px 278px 231.700px 219.300px 120px; margin: 1px 0 0 88.400px; font: 700 18.700px/29px Lato, sans-serif; letter-spacing: .2px; color: #606060; white-space: nowrap; }
.site-nav .tight { letter-spacing: -.8px; }
.site-nav .wide { letter-spacing: .9px; }
.site-nav .on { color: #d8302f; }

main { padding: 52px 0 0 884px; font-feature-settings: "cv11"; }
.crumbs { display: flex; gap: 8px; font-size: 26px; line-height: 36px; color: #222; letter-spacing: -.8px; }
.crumbs a { color: #d9534f; }
.crumbs span { width: 14px; font-size: 21px; font-weight: 500; }
h1 { margin: 74px 0 30px; font-size: 31.500px; font-weight: 500; line-height: 44px; letter-spacing: -.1px; color: #000; }
.lists { display: grid; grid-template-columns: 926px 1fr; }
li { display: flex; align-items: center; height: 40.330px; font-size: 24.500px; color: #1a1a1a; letter-spacing: .3px; }
li::before { content: ""; width: 8px; height: 8px; margin-right: 26px; background: #111; }

footer { position: relative; width: 2560px; height: 524px; margin: auto 0 0 516px; background: #191919; font-family: Lato, sans-serif; color: #8f8f8f; }
.foot-top { display: grid; grid-template-columns: 320.500px 387.500px 773px 300px; padding: 52px 0 0 357px; height: 428px; }
.foot-brand { width: 300px; height: 191.300px; color: #fff; }
h2 { margin-top: 7px; font-size: 25px; line-height: 40px; letter-spacing: 1.450px; color: #fff; white-space: nowrap; }
.links { display: grid; grid-template-columns: 173.500px 1fr; row-gap: 31.500px; margin-top: 4px; font-size: 20px; line-height: 30px; letter-spacing: 1.300px; }
.contact p { font-size: 20px; line-height: 41px; letter-spacing: .85px; white-space: nowrap; }
.contact .hours { letter-spacing: .65px; }
.contact h2 { margin-bottom: -1px; }
.contact b { font-weight: 700; color: #fff; letter-spacing: .95px; }
.contact .phone { font: 400 20px Inter, sans-serif; letter-spacing: .6px; color: #ec5130; }
.social { display: flex; gap: 14px; margin: 13px 0 0 6px; }
.social svg { width: 56px; height: 56px; }
.foot-bottom { display: grid; grid-template-columns: 610.500px 1046px 200px; align-items: baseline; width: 1856px; margin-left: 352px; padding: 27px 0 0 16px; border-top: 2px solid #444; white-space: nowrap; line-height: 30px; }
.credits { justify-self: start; font-size: 18px; line-height: 20px; letter-spacing: 1.450px; border-bottom: 2px solid #999; }
.faint { color: #343434; font-size: 19px; letter-spacing: 1.400px; }
.by { font-size: 17px; letter-spacing: .9px; color: #a3bf3f; }
.access { position: absolute; left: 14px; top: 466px; width: 32px; height: 44px; }

.downloads { display: flex; align-items: center; height: 98px; border: 2px solid #606265; border-top-color: #28292c; border-radius: 0 0 10px 10px; color: #fff; font-size: 27px; letter-spacing: -.3px; white-space: nowrap; }
.dl { display: flex; align-items: center; width: 454.200px; height: 72px; padding: 0 35px 0 38px; border-right: 2px solid #606265; }
.dl:first-child { margin-left: 5px; }
.dl .doc { width: 22px; height: 30px; }
.dl span { flex: 1; margin: 9px 0 0 32px; }
.dl .up { width: 20px; height: 12px; }
.downloads button { width: 158px; height: 64px; margin-left: auto; border: 2px solid #606265; border-radius: 8px; background: #292a2d; color: #fff; font: 500 23px Inter, sans-serif; letter-spacing: -.1px; }
.shut { width: 18px; height: 18px; margin: 0 26px 0 28px; color: #bdc1c6; }
```
